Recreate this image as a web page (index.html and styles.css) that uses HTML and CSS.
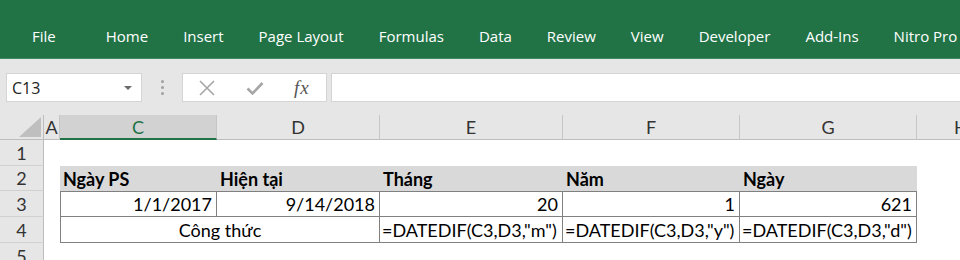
FILE: index.html
```html
<!DOCTYPE html>
<html lang="vi">
<head>
    <meta charset="UTF-8">
    <title>DATEDIF</title>
    <link rel="stylesheet" href="styles.css">
</head>
<body>
    <!-- Ribbon tabs -->
    <div class="ribbon">
        <span class="tab file">File</span>
        <span class="tab">Home</span>
        <span class="tab">Insert</span>
        <span class="tab">Page Layout</span>
        <span class="tab">Formulas</span>
        <span class="tab">Data</span>
        <span class="tab">Review</span>
        <span class="tab">View</span>
        <span class="tab">Developer</span>
        <span class="tab">Add-Ins</span>
        <span class="tab">Nitro Pro</span>
    </div>

    <!-- Formula bar -->
    <div class="fbar">
        <div class="namebox">
            <span>C13</span>
            <span class="caret"></span>
        </div>
        <div class="grip"><i></i><i></i><i></i></div>
        <div class="fbtns">
            <svg width="18" height="18" viewBox="0 0 18 18"><path d="M2 2 L16 16 M16 2 L2 16" stroke="#a6a6a6" stroke-width="1.6" fill="none"/></svg>
            <svg width="18" height="18" viewBox="0 0 18 18"><path d="M1.5 9.5 L6.5 14.5 L16.5 4" stroke="#a6a6a6" stroke-width="2.6" fill="none"/></svg>
            <span class="fx">fx</span>
        </div>
        <div class="finput"></div>
    </div>

    <!-- Sheet -->
    <div class="sheet">
        <div class="hd corner"><span class="tri"></span></div>
        <div class="hd">A</div>
        <div class="hd sel">C</div>
        <div class="hd">D</div>
        <div class="hd">E</div>
        <div class="hd">F</div>
        <div class="hd">G</div>
        <div class="hd last">H</div>

        <div class="rh">1</div>
        <div class="blank span7"></div>

        <div class="rh">2</div>
        <div class="blank"></div>
        <div class="th">Ngày PS</div>
        <div class="th">Hiện tại</div>
        <div class="th">Tháng</div>
        <div class="th">Năm</div>
        <div class="th">Ngày</div>
        <div class="blank"></div>

        <div class="rh">3</div>
        <div class="blank"></div>
        <div class="td num first top">1/1/2017</div>
        <div class="td num top">9/14/2018</div>
        <div class="td num top">20</div>
        <div class="td num top">1</div>
        <div class="td num top">621</div>
        <div class="blank"></div>

        <div class="rh">4</div>
        <div class="blank"></div>
        <div class="td mid first span2">Công thức</div>
        <div class="td">=DATEDIF(C3,D3,"m")</div>
        <div class="td">=DATEDIF(C3,D3,"y")</div>
        <div class="td">=DATEDIF(C3,D3,"d")</div>
        <div class="blank"></div>

        <div class="rh">5</div>
        <div class="blank span7"></div>
    </div>
</body>
</html>
```

FILE: styles.css
```css
* {
    margin: 0;
    padding: 0;
    box-sizing: border-box;
}

body {
    width: 960px;
    height: 260px;
    overflow: hidden;
    background-color: #ffffff;
    font-family: Lato, "Noto Sans", sans-serif;
}

/* Ribbon */
.ribbon {
    height: 59px;
    background-color: #217346;
    border-bottom: 1px solid #3f8a60;
    display: flex;
    align-items: center;
    gap: 35px;
    padding: 14px 0 0 32px;
    white-space: nowrap;
}

.tab {
    font-family: "Open Sans", sans-serif;
    font-size: 15px;
    color: #ffffff;
}

.tab.file {
    margin-right: 15px;
}

/* Formula bar */
.fbar {
    height: 56px;
    background-color: #e6e6e6;
    display: flex;
    align-items: flex-start;
    padding: 14px 0 0 6px;
}

.namebox {
    width: 136px;
    height: 29px;
    background-color: #ffffff;
    border: 1px solid #d4d4d4;
    display: flex;
    align-items: center;
    justify-content: space-between;
    padding: 0 9px 0 5px;
    font-family: "Open Sans", sans-serif;
    font-size: 16px;
    color: #222222;
}

.caret {
    width: 0;
    height: 0;
    border-left: 4px solid transparent;
    border-right: 4px solid transparent;
    border-top: 4px solid #6b6b6b;
}

.grip {
    width: 40px;
    height: 29px;
    display: flex;
    flex-direction: column;
    align-items: center;
    justify-content: center;
    gap: 3px;
}

.grip i {
    width: 3px;
    height: 3px;
    background-color: #a0a0a0;
    border-radius: 50%;
}

.fbtns {
    width: 145px;
    height: 29px;
    background-color: #ffffff;
    border: 1px solid #d4d4d4;
    display: flex;
    align-items: center;
    gap: 30px;
    padding-left: 15px;
}

.fx {
    font-family: "Liberation Serif", serif;
    font-style: italic;
    font-size: 19px;
    color: #555555;
    letter-spacing: 1px;
}

.finput {
    flex: 1;
    height: 29px;
    margin-left: 4px;
    background-color: #ffffff;
    border: 1px solid #d4d4d4;
    border-right: none;
}

/* Sheet grid */
.sheet {
    display: grid;
    grid-template-columns: 44px 16px 157px 163px 183px 177px 177px 1fr;
    grid-template-rows: 25px 26px 25px 26px 26px 26px;
    font-size: 18px;
    color: #000000;
}

.hd {
    background-color: #e6e6e6;
    border-right: 1px solid #c6c6c6;
    border-bottom: 1px solid #bdbdbd;
    display: flex;
    align-items: center;
    justify-content: center;
    color: #333333;
    overflow: hidden;
}

.hd.last {
    justify-content: flex-start;
    padding-left: 37px;
    border-right: none;
}

.hd.sel {
    background-color: #d2d2d2;
    color: #217346;
    border-bottom: 2px solid #217346;
}

.corner {
    position: relative;
    border-right: 1px solid #bdbdbd;
}

.tri {
    position: absolute;
    right: 2px;
    bottom: 2px;
    width: 0;
    height: 0;
    border-left: 22px solid transparent;
    border-bottom: 20px solid #bfbfbf;
}

.rh {
    background-color: #e6e6e6;
    border-right: 1px solid #bdbdbd;
    border-bottom: 1px solid #d0d0d0;
    display: flex;
    align-items: center;
    justify-content: center;
    color: #333333;
}

.span7 {
    grid-column: span 7;
}

.span2 {
    grid-column: span 2;
}

.th {
    background-color: #d9d9d9;
    font-weight: bold;
    display: flex;
    align-items: center;
    padding-left: 3px;
}

.td {
    border-right: 1px solid #808080;
    border-bottom: 1px solid #808080;
    display: flex;
    align-items: center;
    padding: 0 2px;
    white-space: nowrap;
}

.td.first {
    border-left: 1px solid #808080;
}

.td.top {
    border-top: 1px solid #808080;
}

.td.num {
    justify-content: flex-end;
    padding-right: 4px;
}

.td.mid {
    justify-content: center;
}
```
